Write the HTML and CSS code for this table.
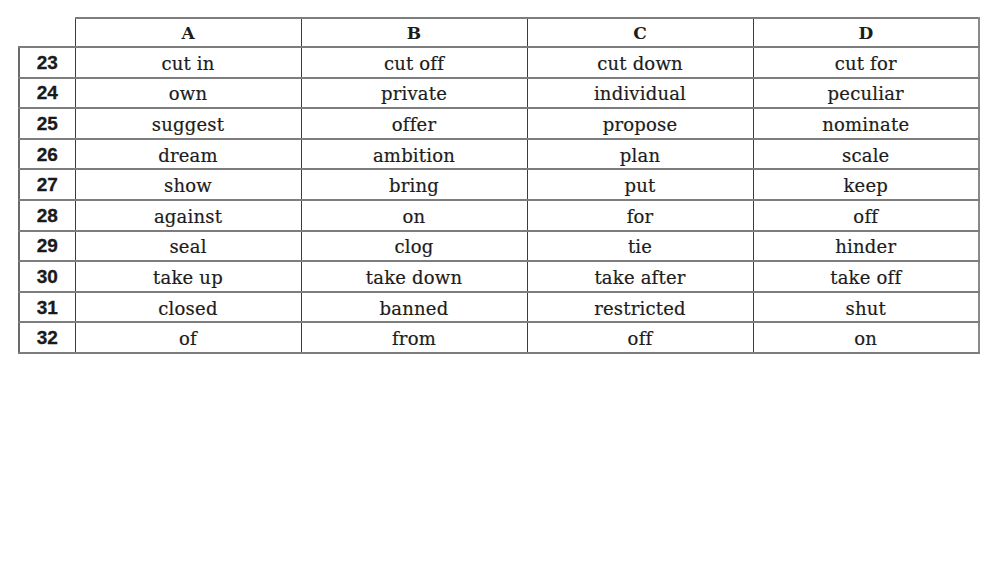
FILE: index.html
```html
<!DOCTYPE html>
<html>
<head>
<meta charset="utf-8">
<link rel="stylesheet" href="styles.css">
</head>
<body>
<table class="grid">
  <colgroup>
    <col class="c-num"><col class="c-opt"><col class="c-opt"><col class="c-opt"><col class="c-opt">
  </colgroup>
  <thead>
    <tr><th class="corner"></th><th>A</th><th>B</th><th>C</th><th>D</th></tr>
  </thead>
  <tbody>
    <tr><td class="num">23</td><td>cut in</td><td>cut off</td><td>cut down</td><td>cut for</td></tr>
    <tr><td class="num">24</td><td>own</td><td>private</td><td>individual</td><td>peculiar</td></tr>
    <tr><td class="num">25</td><td>suggest</td><td>offer</td><td>propose</td><td>nominate</td></tr>
    <tr><td class="num">26</td><td>dream</td><td>ambition</td><td>plan</td><td>scale</td></tr>
    <tr><td class="num">27</td><td>show</td><td>bring</td><td>put</td><td>keep</td></tr>
    <tr><td class="num">28</td><td>against</td><td>on</td><td>for</td><td>off</td></tr>
    <tr><td class="num">29</td><td>seal</td><td>clog</td><td>tie</td><td>hinder</td></tr>
    <tr><td class="num">30</td><td>take up</td><td>take down</td><td>take after</td><td>take off</td></tr>
    <tr><td class="num">31</td><td>closed</td><td>banned</td><td>restricted</td><td>shut</td></tr>
    <tr><td class="num">32</td><td>of</td><td>from</td><td>off</td><td>on</td></tr>
  </tbody>
</table>
</body>
</html>
```

FILE: styles.css
```css
html, body {
  margin: 0;
  padding: 0;
  background: #ffffff;
}
body {
  padding: 17px 0 0 18px;
  font-family: "DejaVu Serif", "Liberation Serif", serif;
  color: #1c1c1c;
}
.grid {
  border-collapse: collapse;
  table-layout: fixed;
  width: 960px;
}
.c-num { width: 56px; }
.c-opt { width: 226px; }
.grid th, .grid td {
  border-top: 2px solid #7d7d7d;
  border-bottom: 2px solid #7d7d7d;
  border-left: 1px solid #3c3c3c;
  border-right: 1px solid #3c3c3c;
  text-align: center;
  padding: 0;
}
.grid th {
  height: 26px;
  font-weight: bold;
  font-size: 17px;
  padding-top: 1px;
  line-height: 1;
}
.grid th.corner {
  border-top: none;
  border-left: none;
  border-bottom: 2px solid #7d7d7d;
}
.grid td {
  height: 25.6px;
  font-size: 18px;
  letter-spacing: 0.2px;
  -webkit-text-stroke: 0.2px #1c1c1c;
  padding-top: 3px;
  line-height: 1;
}
.grid td.num {
  font-family: "Liberation Sans", Arial, sans-serif;
  font-weight: bold;
  font-size: 19px;
  letter-spacing: 0;
  -webkit-text-stroke: 0.3px #1a1a1a;
  color: #1a1a1a;
  border-left: 2px solid #6a6a6a;
  padding-top: 0;
  height: 28.6px;
}
.grid th:last-child, .grid td:last-child {
  border-right: 2px solid #8a8a8a;
}
```
